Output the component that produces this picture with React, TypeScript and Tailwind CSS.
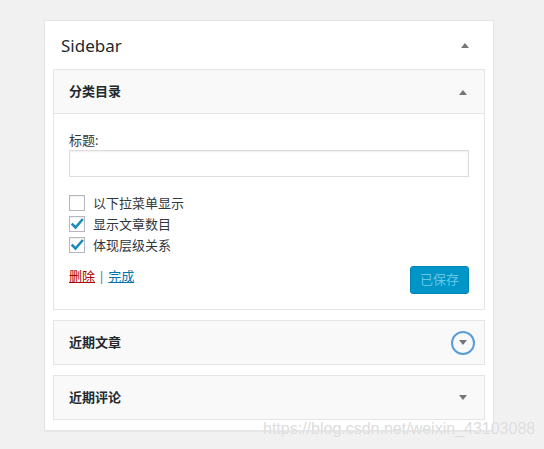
import React from 'react';

const Arrow = ({ up }: { up?: boolean }) => (
    <svg width="10" height="6" viewBox="0 0 10 6" className="block">
        {up ? <path d="M1 6 L5 1 L9 6 Z" fill="#72777c" /> : <path d="M1 0 L5 5 L9 0 Z" fill="#72777c" />}
    </svg>
);

const Check = ({ checked }: { checked?: boolean }) => (
    <span className="w-4 h-4 border border-[#b4b9be] bg-white flex items-center justify-center shadow-[inset_0_1px_2px_rgba(0,0,0,0.07)]">
        {checked && (
            <svg width="13" height="12" viewBox="0 0 13 12">
                <path d="M1.5 6.5 L4.5 9.5 L11 2" stroke="#1e8cbe" strokeWidth="2.6" fill="none" strokeLinecap="square" />
            </svg>
        )}
    </span>
);

const ClosedWidget = ({ title, focused }: { title: string; focused?: boolean }) => (
    <div className="mx-2 border border-[#e5e5e5] bg-[#f9f9f9] h-[45px] flex items-center justify-between pl-[15px] pr-[9px]">
        <span className="text-[13px] font-semibold text-[#23282d]">{title}</span>
        <span className={'w-6 h-6 rounded-full flex items-center justify-center ' + (focused ? 'border-2 border-[#5b9dd9]' : '')}>
            <Arrow />
        </span>
    </div>
);

export default function App() {
    const font = { fontFamily: '"Noto Sans", "Noto Sans CJK SC", sans-serif' };
    return (
        <div className="w-[544px] h-[449px] bg-[#f1f1f1] relative overflow-hidden" style={font}>
            <div className="absolute left-[44px] top-[20px] w-[450px] h-[411px] bg-white border border-[#e5e5e5] shadow-[0_1px_1px_rgba(0,0,0,0.04)]">
                <div className="flex items-center justify-between h-[48px] pl-[16px] pr-[23px]">
                    <span className="text-[17px] text-[#23282d] leading-none">Sidebar</span>
                    <Arrow up />
                </div>
                <div className="mx-2 border border-[#e5e5e5]">
                    <div className="bg-[#f9f9f9] h-[44px] flex items-center justify-between pl-[15px] pr-[16px] border-b border-[#e5e5e5]">
                        <span className="text-[13px] font-semibold text-[#23282d]">分类目录</span>
                        <Arrow up />
                    </div>
                    <div className="bg-white px-[15px] pt-[17px] pb-[15px] text-[13px] text-[#32373c]">
                        <div className="leading-[18px]">标题:</div>
                        <div className="mt-[1px] h-[27px] border border-[#dddddd] shadow-[inset_0_1px_2px_rgba(0,0,0,0.07)]" />
                        <div className="mt-[18px] flex flex-col gap-[5px]">
                            <label className="flex items-center gap-2 leading-4"><Check />以下拉菜单显示</label>
                            <label className="flex items-center gap-2 leading-4"><Check checked />显示文章数目</label>
                            <label className="flex items-center gap-2 leading-4"><Check checked />体现层级关系</label>
                        </div>
                        <div className="mt-[13px] flex items-start justify-between">
                            <div className="leading-5">
                                <span className="text-[#a00] underline">删除</span>
                                <span className="text-[#72777c] mx-[3px]">|</span>
                                <span className="text-[#0073aa] underline">完成</span>
                            </div>
                            <button className="h-[28px] px-[9px] rounded-[3px] bg-[#0095c7] border border-[#0084b5] text-[#66c6e4] text-[13px]">已保存</button>
                        </div>
                    </div>
                </div>
                <div className="h-[10px]" />
                <ClosedWidget title="近期文章" focused />
                <div className="h-[10px]" />
                <ClosedWidget title="近期评论" />
            </div>
            <div className="absolute left-[263px] top-[420px] text-[16px] leading-[18px] text-[#dcdcdc] [text-shadow:0_0_1px_#ffffff]" style={{ fontFamily: '"Liberation Sans", Arial, sans-serif' }}>
                https://blog.csdn.net/weixin_43103088
            </div>
        </div>
    );
}
